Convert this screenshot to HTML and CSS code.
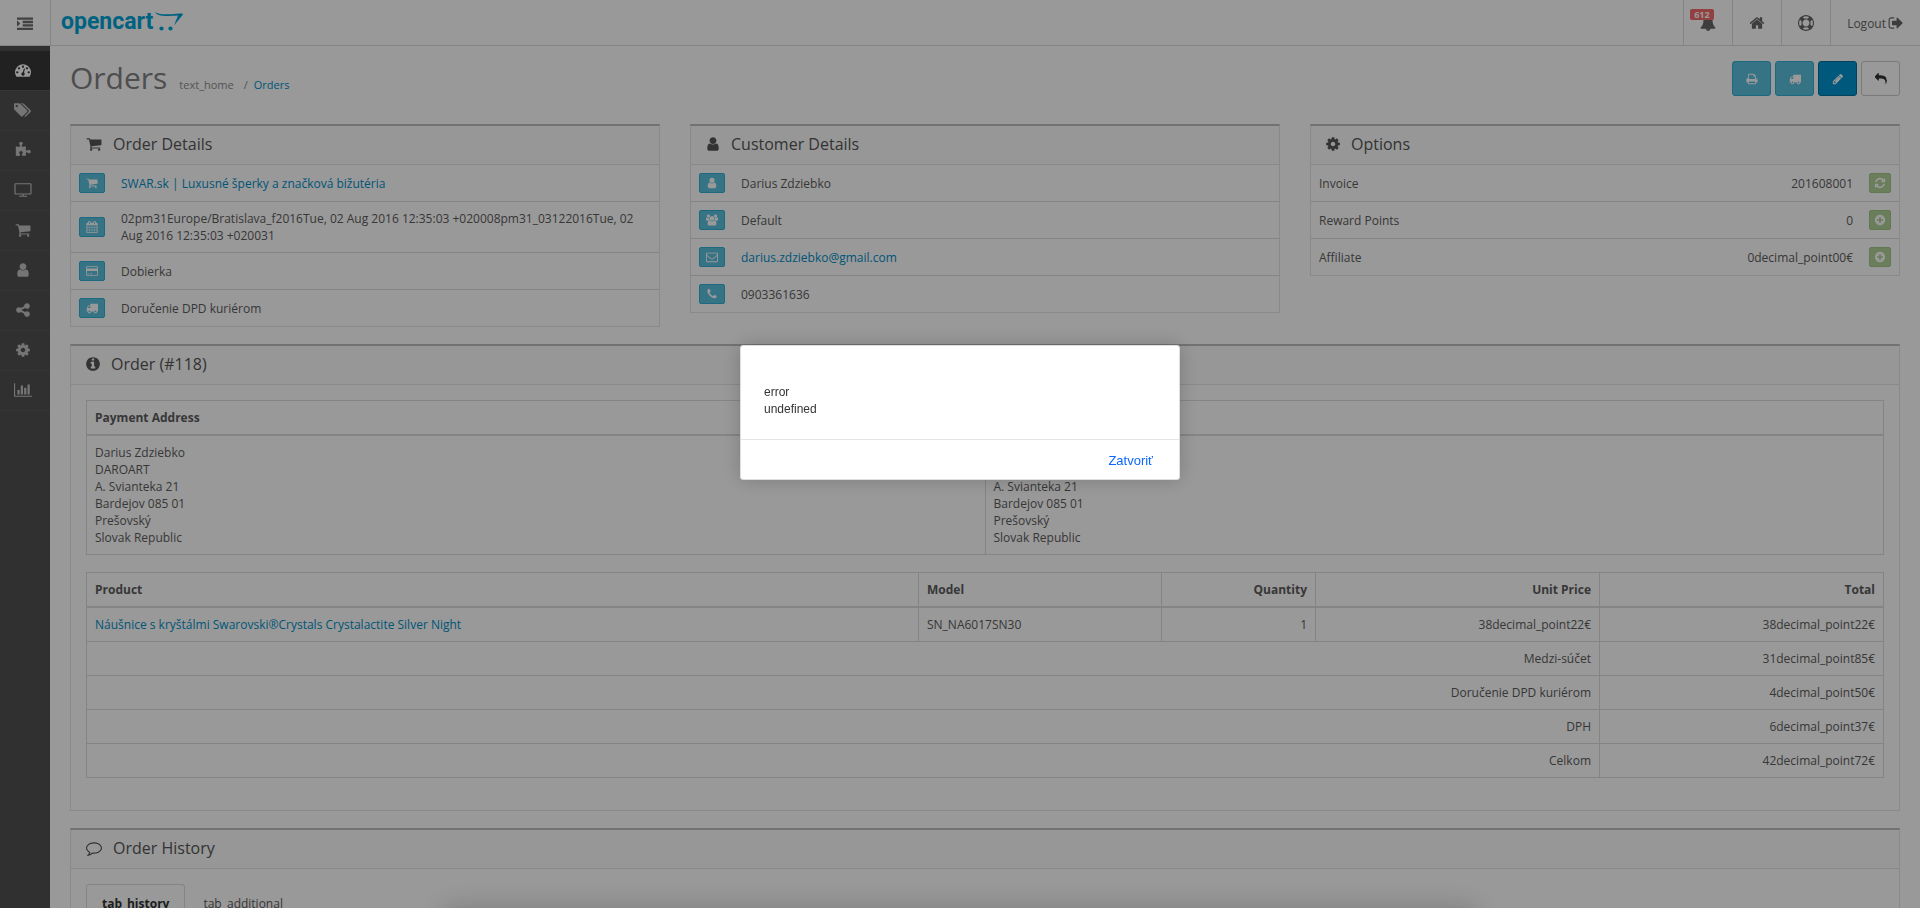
FILE: index.html
```html
<!DOCTYPE html>
<html lang="en">
  <head>
    <meta charset="UTF-8" />
    <meta name="viewport" content="width=device-width, initial-scale=1.0" />
    <title>Orders</title>
    <link rel="stylesheet" href="styles.css" />
  </head>
  <body>
    <!-- Icon sprite -->
    <svg class="sprite" aria-hidden="true">
      <symbol id="cart" viewBox="0 0 1792 1792"><path d="M704 1536q0 52-38 90t-90 38-90-38-38-90 38-90 90-38 90 38 38 90zm896 0q0 52-38 90t-90 38-90-38-38-90 38-90 90-38 90 38 38 90zm128-1088v512q0 24-16.5 42.5t-40.5 21.5l-1044 122q13 60 13 70 0 16-24 64h920q26 0 45 19t19 45-19 45-45 19h-1024q-26 0-45-19t-19-45q0-11 8-31.5t16-36 21.5-40 15.5-29.5l-177-823h-204q-26 0-45-19t-19-45 19-45 45-19h256q16 0 28.5 6.5t19.5 15.5 13 24.5 8 26 5.5 29.5 4.5 26h1201q26 0 45 19t19 45z" /></symbol>
      <symbol id="user" viewBox="0 0 1792 1792"><path d="M1536 1399q0 109-62.5 187t-150.5 78h-854q-88 0-150.5-78t-62.5-187q0-85 8.5-160.5t31.5-152 58.5-131 94-89 134.5-34.5q131 128 313 128t313-128q76 0 134.500 34.500t94 89 58.500 131 31.500 152 8.500 160.500zm-256-887q0 159-112.500 271.500t-271.500 112.500-271.500-112.500-112.500-271.500 112.500-271.500 271.500-112.500 271.500 112.500 112.500 271.500z" /></symbol>
      <symbol id="cog" viewBox="0 0 1792 1792"><path d="M1152 896q0-106-75-181t-181-75-181 75-75 181 75 181 181 75 181-75 75-181zm512-109v222q0 12-8 23t-20 13l-185 28q-19 54-39 91 35 50 107 138 10 12 10 25t-9 23q-27 37-99 108t-94 71q-12 0-26-9l-138-108q-44 23-91 38-16 136-29 186-7 28-36 28h-222q-14 0-24.500-8.500t-11.500-21.500l-28-184q-49-16-90-37l-141 107q-10 9-25 9-14 0-25-11-126-114-165-168-7-10-7-23 0-12 8-23 15-21 51-66.500t54-70.500q-27-50-41-99l-183-27q-13-2-21-12.500t-8-23.500v-222q0-12 8-23t19-13l186-28q14-46 39-92-40-57-107-138-10-12-10-24 0-10 9-23 26-36 98.500-107.500t94.500-71.500q13 0 26 10l138 107q44-23 91-38 16-136 29-186 7-28 36-28h222q14 0 24.500 8.500t11.500 21.500l28 184q49 16 90 37l142-107q9-9 24-9 13 0 25 10 129 119 165 170 7 8 7 22 0 12-8 23-15 21-51 66.500t-54 70.500q26 50 41 98l183 28q13 2 21 12.500t8 23.500z" /></symbol>
      <symbol id="home" viewBox="0 0 1792 1792"><path d="M1472 992v480q0 26-19 45t-45 19h-384v-384h-256v384h-384q-26 0-45-19t-19-45v-480q0-1 .5-3t.5-3l575-474 575 474q1 2 1 6zm223-69l-62 74q-8 9-21 11h-3q-13 0-21-7l-692-577-692 577q-12 8-24 7-13-2-21-11l-62-74q-8-10-7-23.500t11-21.500l719-599q32-26 76-26t76 26l244 204v-195q0-14 9-23t23-9h192q14 0 23 9t9 23v408l219 182q10 8 11 21.500t-7 23.500z" /></symbol>
      <symbol id="truck" viewBox="0 0 1792 1792"><path d="M640 1408q0-52-38-90t-90-38-90 38-38 90 38 90 90 38 90-38 38-90zm-384-512h384v-256h-158q-13 0-22 9l-195 195q-9 9-9 22v30zm1280 512q0-52-38-90t-90-38-90 38-38 90 38 90 90 38 90-38 38-90zm256-1088v1024q0 15-4 26.500t-13.500 18.500-16.500 11.500-23.500 6-22.500 2-25.500 0-22.500-.5q0 106-75 181t-181 75-181-75-75-181h-384q0 106-75 181t-181 75-181-75-75-181h-64q-3 0-22.500.5t-25.500 0-22.500-2-23.500-6-16.500-11.500-13.500-18.500-4-26.500q0-26 19-45t45-19v-320q0-8-.5-35t0-38 2.500-34.500 6.500-37 14-30.500 22.500-30l198-198q19-19 50.500-32t58.500-13h160v-192q0-26 19-45t45-19h1024q26 0 45 19t19 45z" /></symbol>
      <symbol id="pencil" viewBox="0 0 1792 1792"><path d="M491 1536l91-91-235-235-91 91v107h128v128h107zm523-928q0-22-22-22-10 0-17 7l-542 542q-7 7-7 17 0 22 22 22 10 0 17-7l542-542q7-7 7-17zm-54-192l416 416-832 832h-416v-416zm683 96q0 53-37 90l-166 166-416-416 166-165q36-38 90-38 53 0 91 38l235 234q37 39 37 91z" /></symbol>
      <symbol id="reply" viewBox="0 0 1792 1792"><path d="M1792 1120q0 166-127 451-3 7-10.500 24t-13.500 30-13 22q-12 17-28 17-15 0-23.500-10t-8.500-25q0-9 2.500-26.500t2.500-23.500q5-68 5-123 0-112-19.500-200.500t-54-153.500-89-112-117-78-146-49-170.500-25.500-192-7.500h-224v256q0 26-19 45t-45 19-45-19l-512-512q-19-19-19-45t19-45l512-512q19-19 45-19t45 19 19 45v256h224q713 0 875 403 53 134 53 333z" /></symbol>
      <symbol id="print" viewBox="0 0 1792 1792"><path d="M448 1536h896v-256h-896v256zm0-640h896v-384h-160q-40 0-68-28t-28-68v-160h-640v640zm1152 64q0-26-19-45t-45-19-45 19-19 45 19 45 45 19 45-19 19-45zm128 0v416q0 13-9.500 22.500t-22.500 9.500h-224v160q0 40-28 68t-68 28h-960q-40 0-68-28t-28-68v-160h-224q-13 0-22.500-9.500t-9.500-22.500v-416q0-79 56.500-135.500t135.500-56.500h64v-544q0-40 28-68t68-28h672q40 0 88 20t76 48l152 152q28 28 48 76t20 88v256h64q79 0 135.500 56.500t56.500 135.500z" /></symbol>
      <symbol id="plus" viewBox="0 0 1792 1792"><path d="M1344 960v-128q0-26-19-45t-45-19h-256v-256q0-26-19-45t-45-19h-128q-26 0-45 19t-19 45v256h-256q-26 0-45 19t-19 45v128q0 26 19 45t45 19h256v256q0 26 19 45t45 19h128q26 0 45-19t19-45v-256h256q26 0 45-19t19-45zm320-64q0 209-103 385.500t-279.500 279.500-385.500 103-385.500-103-279.500-279.500-103-385.500 103-385.500 279.500-279.500 385.500-103 385.500 103 279.500 279.500 103 385.500z" /></symbol>
      <symbol id="info" viewBox="0 0 1792 1792"><path d="M1152 1376v-160q0-14-9-23t-23-9h-96v-512q0-14-9-23t-23-9h-320q-14 0-23 9t-9 23v160q0 14 9 23t23 9h96v320h-96q-14 0-23 9t-9 23v160q0 14 9 23t23 9h448q14 0 23-9t9-23zm-128-896v-160q0-14-9-23t-23-9h-192q-14 0-23 9t-9 23v160q0 14 9 23t23 9h192q14 0 23-9t9-23zm640 416q0 209-103 385.500t-279.500 279.500-385.500 103-385.500-103-279.500-279.500-103-385.500 103-385.500 279.500-279.500 385.500-103 385.500 103 279.500 279.500 103 385.500z" /></symbol>
      <symbol id="phone" viewBox="0 0 1792 1792"><path d="M1600 1240q0 27-10 70.500t-21 68.500q-21 50-122 106-94 51-186 51-27 0-52.500-3.500t-57.500-12.500-47.500-14.500-55.500-20.500-49-18q-98-35-175-83-128-79-264.500-215.500t-215.500-264.500q-48-77-83-175-3-9-18-49t-20.500-55.500-14.500-47.500-12.500-57.500-3.500-52.500q0-92 51-186 56-101 106-122 25-11 68.500-21t70.500-10q14 0 21 3 18 6 53 76 11 19 30 54t35 63.500 31 53.500q3 4 17.500 25t21.500 35.500 7 28.500q0 20-28.500 50t-62 55-62 53-28.500 46q0 9 5 22.500t8.500 20.500 14 24 11.500 19q76 137 174 235t235 174q2 1 19 11.500t24 14 20.500 8.500 22.500 5q18 0 46-28.500t53-62 55-62 50-28.500q14 0 28.500 7t35.500 21.500 25 17.500q25 15 53.500 31t63.500 35 54 30q70 35 76 53 3 7 3 21z" /></symbol>
      <symbol id="bell" viewBox="0 0 1792 1792"><path d="M912 1696q0-16-16-16-59 0-101.500-42.500t-42.500-101.500q0-16-16-16t-16 16q0 73 51.500 124.500t124.500 51.500q16 0 16-16zm816-288q0 52-38 90t-90 38h-448q0 106-75 181t-181 75-181-75-75-181h-448q-52 0-90-38t-38-90q50-42 91-88t85-119.500 74.500-158.500 50-206 19.500-260q0-152 117-282.500t307-158.500q-8-19-8-39 0-40 28-68t68-28 68 28 28 68q0 20-8 39 190 28 307 158.500t117 282.500q0 139 19.500 260t50 206 74.500 158.500 85 119.500 91 88z" /></symbol>
      <symbol id="tags" viewBox="0 0 1920 1792"><path d="M384 448q0-53-37.500-90.500t-90.500-37.500-90.500 37.500-37.500 90.500 37.500 90.500 90.500 37.500 90.500-37.500 37.500-90.500zm1067 576q0 53-37 90l-491 492q-39 37-91 37-53 0-90-37l-715-716q-38-37-64.500-101t-26.500-117v-416q0-52 38-90t90-38h416q53 0 117 26.500t102 64.500l715 714q37 39 37 91zm384 0q0 53-37 90l-491 492q-39 37-91 37-36 0-59-14t-53-45l470-470q37-37 37-90 0-52-37-91l-715-714q-38-38-102-64.500t-117-26.500h224q53 0 117 26.500t102 64.500l715 714q37 39 37 91z" /></symbol>
      <symbol id="share" viewBox="0 0 1792 1792"><path d="M1344 1024q133 0 226.500 93.500t93.500 226.500-93.500 226.500-226.500 93.500-226.500-93.500-93.500-226.500q0-12 2-34l-360-180q-92 86-218 86-133 0-226.500-93.500t-93.500-226.500 93.500-226.500 226.500-93.500q126 0 218 86l360-180q-2-22-2-34 0-133 93.500-226.500t226.500-93.500 226.500 93.500 93.500 226.500-93.500 226.500-226.500 93.500q-126 0-218-86l-360 180q2 22 2 34t-2 34l360 180q92-86 218-86z" /></symbol>
      <symbol id="chart" viewBox="0 0 2048 1792"><path d="M640 896v512h-256v-512h256zm384-512v1024h-256v-1024h256zm1024 1152v128h-2048v-1536h128v1408h1920zm-640-896v768h-256v-768h256zm384-384v1152h-256v-1152h256z" /></symbol>
      <symbol id="tv" viewBox="0 0 1920 1792"><path d="M1792 1248v-960q0-13-9.500-22.500t-22.500-9.500h-1600q-13 0-22.500 9.500t-9.500 22.500v960q0 13 9.500 22.500t22.500 9.500h1600q13 0 22.500-9.500t9.500-22.500zm128-960v960q0 66-47 113t-113 47h-736v128h352q14 0 23 9t9 23v64q0 14-9 23t-23 9h-832q-14 0-23-9t-9-23v-64q0-14 9-23t23-9h352v-128h-736q-66 0-113-47t-47-113v-960q0-66 47-113t113-47h1600q66 0 113 47t47 113z" /></symbol>
      <symbol id="puzzle" viewBox="0 0 1792 1792"><path d="M1755 1083q0 81-44.500 135t-123.500 54q-41 0-77.500-17.500t-59-38-56.500-38-71-17.500q-110 0-110 124 0 39 16 115t15 115v5q-22 0-33 1-34 3-97.500 11.500t-115.500 13.500-98 5q-61 0-103-26.500t-42-83.500q0-37 17.500-71t38-56.500 38-59 17.500-77.500q0-79-54-123.500t-135-44.500q-84 0-143 45.500t-59 127.500q0 43 15 83t33.500 64.500 33.500 53 15 50.500q0 45-46 89-37 35-117 35-95 0-245-24-9-2-27.500-4t-27.500-4l-13-2q-1 0-3-1-2 0-2-1v-1024q2 1 17.500 3.500t34 5 21.500 3.500q150 24 245 24 80 0 117-35 46-44 46-89 0-22-15-50.500t-33.500-53-33.500-64.500-15-83q0-82 59-127.500t144-45.500q80 0 134 44.500t54 123.500q0 41-17.500 77.500t-38 59-38 56.500-17.500 71q0 57 42 83.500t103 26.500q64 0 180-15t163-17v2q-1 2-3.500 17.500t-5 34-3.500 21.500q-24 150-24 245 0 80 35 117 44 46 89 46 22 0 50.500-15t53-33.500 64.500-33.500 83-15q82 0 127.500 59t45.500 143z" /></symbol>
      <symbol id="gauge" viewBox="0 0 1792 1792"><path d="M384 1152q0-53-37.500-90.500t-90.500-37.500-90.500 37.500-37.500 90.500 37.500 90.500 90.500 37.500 90.500-37.500 37.500-90.500zm192-448q0-53-37.500-90.500t-90.500-37.500-90.500 37.500-37.500 90.500 37.500 90.500 90.500 37.500 90.500-37.500 37.500-90.500zm428 481l101-382q6-26-7.500-48.500t-38.500-29.500-48 6.500-30 39.500l-101 382q-60 5-107 43.500t-63 98.500q-20 77 20 146t117 89 146-20 89-117q16-60-6-117t-72-91zm660-33q0-53-37.500-90.500t-90.500-37.500-90.500 37.500-37.500 90.500 37.500 90.500 90.500 37.500 90.500-37.500 37.500-90.500zm-640-640q0-53-37.500-90.500t-90.500-37.500-90.500 37.500-37.500 90.500 37.500 90.500 90.500 37.500 90.500-37.500 37.500-90.500zm448 192q0-53-37.500-90.500t-90.500-37.500-90.500 37.500-37.500 90.500 37.500 90.500 90.500 37.500 90.500-37.500 37.500-90.500zm320 448q0 261-141 483-19 29-54 29h-1402q-35 0-54-29-141-221-141-483 0-182 71-348t191-286 286-191 348-71 348 71 286 191 191 286 71 348z" /></symbol>
      <symbol id="indent" viewBox="0 0 1792 1792"><path d="M352 832q0 14-9 23l-288 288q-9 9-23 9-13 0-22.500-9.500t-9.500-22.500v-576q0-13 9.500-22.500t22.500-9.500q14 0 23 9l288 288q9 9 9 23zM0 160h1792v256h-1792zM640 544h1152v256h-1152zM640 928h1152v256h-1152zM0 1312h1792v256h-1792z" /></symbol>
      <symbol id="ring" viewBox="0 0 1792 1792"><path d="M896 0q182 0 348 71t286 191 191 286 71 348-71 348-191 286-286 191-348 71-348-71-286-191-191-286-71-348 71-348 191-286 286-191 348-71zm0 128q-190 0-361 90l194 194q82-28 167-28t167 28l194-194q-171-90-361-90zm-678 1129l194-194q-28-82-28-167t28-167l-194-194q-90 171-90 361t90 361zm678 407q190 0 361-90l-194-194q-82 28-167 28t-167-28l-194 194q171 90 361 90zm0-384q159 0 271.500-112.500t112.500-271.500-112.500-271.500-271.500-112.500-271.500 112.500-112.500 271.500 112.500 271.500 271.500 112.500zm484-217l194 194q90-171 90-361t-90-361l-194 194q28 82 28 167t-28 167z" /></symbol>
      <symbol id="signout" viewBox="0 0 1792 1792"><path d="M704 1440q0 4 1 20t.5 26.500-3 23.500-10 19.500-20.500 6.500h-320q-119 0-203.500-84.500t-84.500-203.500v-704q0-119 84.500-203.500t203.500-84.500h320q13 0 22.500 9.500t9.500 22.500q0 4 1 20t.5 26.500-3 23.500-10 19.500-20.500 6.500h-320q-66 0-113 47t-47 113v704q0 66 47 113t113 47h312l11.500 1 11.500 3 8 5.500 7 9 2 13.500zm928-544q0 26-19 45l-544 544q-19 19-45 19t-45-19-19-45v-288h-448q-26 0-45-19t-19-45v-384q0-26 19-45t45-19h448v-288q0-26 19-45t45-19 45 19l544 544q19 19 19 45z" /></symbol>
      <symbol id="comment" viewBox="0 0 1792 1792"><path d="M896 384q-204 0-381.500 69.500t-282 187.500-104.500 255q0 112 71.500 213.500t201.500 175.500l87 50-27 96q-24 91-70 172 152-63 275-171l43-38 57 6q69 8 130 8 204 0 381.500-69.500t282-187.500 104.500-255-104.500-255-282-187.500-381.500-69.500zm896 512q0 174-120 321.500t-326 233-450 85.500q-70 0-145-8-198 175-460 242-49 14-114 22h-5q-15 0-27-10.500t-16-27.500v-1q-3-4-.5-12t2-10 4.500-9.500l6-9 7-8.500 8-9q7-8 31-34.500t34.500-38 31-39.500 32.500-51 27-59 26-76q-157-89-247.500-220t-90.500-281q0-174 120-321.500t326-233 450-85.500 450 85.500 326 233 120 321.500z" /></symbol>
      <symbol id="card" viewBox="0 0 1920 1792"><path d="M1760 128q66 0 113 47t47 113v1216q0 66-47 113t-113 47h-1600q-66 0-113-47t-47-113v-1216q0-66 47-113t113-47h1600zm-1600 128q-13 0-22.500 9.500t-9.500 22.500v224h1664v-224q0-13-9.500-22.500t-22.500-9.500h-1600zm1600 1280q13 0 22.500-9.500t9.500-22.500v-608h-1664v608q0 13 9.500 22.500t22.500 9.500h1600zm-1504-128v-128h256v128h-256zm384 0v-128h384v128h-384z" /></symbol>
      <symbol id="calendar" viewBox="0 0 1792 1792"><path d="M192 1664h288v-288h-288v288zm352 0h320v-288h-320v288zm-352-352h288v-320h-288v320zm352 0h320v-320h-320v320zm-352-384h288v-288h-288v288zm736 736h320v-288h-320v288zm-384-736h320v-288h-320v288zm768 736h288v-288h-288v288zm-384-352h320v-320h-320v320zm-352-864v-288q0-13-9.500-22.500t-22.500-9.500h-64q-13 0-22.500 9.500t-9.500 22.500v288q0 13 9.500 22.500t22.500 9.500h64q13 0 22.500-9.500t9.500-22.500zm736 864h288v-320h-288v320zm-384-384h320v-288h-320v288zm384 0h288v-288h-288v288zm32-480v-288q0-13-9.500-22.500t-22.500-9.500h-64q-13 0-22.500 9.500t-9.500 22.500v288q0 13 9.500 22.500t22.500 9.500h64q13 0 22.500-9.500t9.500-22.500zm384-64v1280q0 52-38 90t-90 38h-1408q-52 0-90-38t-38-90v-1280q0-52 38-90t90-38h128v-96q0-66 47-113t113-47h64q66 0 113 47t47 113v96h384v-96q0-66 47-113t113-47h64q66 0 113 47t47 113v96h128q52 0 90 38t38 90z" /></symbol>
      <symbol id="envelope" viewBox="0 0 1792 1792"><path d="M1664 1504v-768q-32 36-69 66-268 206-426 338-51 43-83 67t-86.500 48.500-102.500 24.500h-2q-48 0-102.500-24.500t-86.500-48.500-83-67q-158-132-426-338-37-30-69-66v768q0 13 9.500 22.500t22.500 9.500h1472q13 0 22.500-9.500t9.500-22.500zm0-1051v-24.500l-.5-13-3-12.500-5.500-9-9-7.500-14-2.500h-1472q-13 0-22.500 9.500t-9.500 22.500q0 168 147 284 193 152 401 317 6 5 35 29.500t46 37.500 44.500 31.500 50.500 27.500 43 9h2q20 0 43-9t50.500-27.500 44.500-31.500 46-37.500 35-29.500q208-165 401-317 54-43 100.500-115.500t46.500-131.500zm128-37v1088q0 66-47 113t-113 47h-1472q-66 0-113-47t-47-113v-1088q0-66 47-113t113-47h1472q66 0 113 47t47 113z" /></symbol>
      <symbol id="group" viewBox="0 0 1920 1792"><path d="M593 896q-162 5-265 128h-134q-82 0-138-40.500t-56-118.500q0-353 124-353 6 0 43.500 21t97.500 42.500 119 21.500q67 0 133-23-5 37-5 66 0 159 93 293zm1071 637q0 120-73 189.500t-194 69.500h-874q-121 0-194-69.500t-73-189.500q0-53 3.500-103.500t14-109 26.500-108.500 43-97.500 62-81 85.500-53.500 111.500-20q10 0 43 21.500t73 48 107 48 135 21.500 135-21.500 107-48 73-48 43-21.500q61 0 111.500 20t85.500 53.500 62 81 43 97.500 26.500 108.500 14 109 3.500 103.500zm-1024-1277q0 106-75 181t-181 75-181-75-75-181 75-181 181-75 181 75 75 181zm704 384q0 159-112.500 271.500t-271.500 112.500-271.500-112.500-112.500-271.500 112.500-271.500 271.500-112.500 271.500 112.500 112.500 271.500zm576 225q0 78-56 118.500t-138 40.500h-134q-103-123-265-128 93-134 93-293 0-29-5-66 66 23 133 23 59 0 119-21.500t97.500-42.500 43.500-21q124 0 124 353zm-128-609q0 106-75 181t-181 75-181-75-75-181 75-181 181-75 181 75 75 181z" /></symbol>
      <symbol id="refresh" viewBox="0 0 1792 1792"><path d="M1639 1056q0 5-1 7-64 268-268 434.500t-478 166.500q-146 0-282.500-55t-243.500-157l-129 129q-19 19-45 19t-45-19-19-45v-448q0-26 19-45t45-19h448q26 0 45 19t19 45-19 45l-137 137q71 66 161 102t187 36q134 0 250-65t186-179q11-17 53-117 8-23 30-23h192q13 0 22.500 9.500t9.500 22.500zm25-800v448q0 26-19 45t-45 19h-448q-26 0-45-19t-19-45 19-45l138-138q-148-137-349-137-134 0-250 65t-186 179q-11 17-53 117-8 23-30 23h-199q-13 0-22.500-9.500t-9.500-22.500v-7q65-268 270-434.500t480-166.500q146 0 284 55.500t245 156.500l130-129q19-19 45-19t45 19 19 45z" /></symbol>
    </svg>

    <header class="header">
      <button type="button" class="menu-toggle" aria-label="Toggle menu">
        <svg class="icon icon-lg"><use href="#indent" /></svg>
      </button>
      <a href="#" class="brand">
        <span class="brand-name">opencart</span>
        <svg class="brand-cart" viewBox="0 0 28 20">
          <path d="M0 0C2 4 8 4.500 23 3.500L19 13.500 28 2.500C28 1 26 1.500 22 1.700 12 2.500 4 3 0 0Z" />
          <circle cx="6.500" cy="16.500" r="2.100" />
          <circle cx="15.500" cy="16.500" r="2.100" />
        </svg>
      </a>
      <nav class="top-nav">
        <a href="#" class="alerts" aria-label="Notifications">
          <svg class="icon icon-lg"><use href="#bell" /></svg>
          <span class="badge">612</span>
        </a>
        <a href="#" aria-label="Home"><svg class="icon icon-lg"><use href="#home" /></svg></a>
        <a href="#" aria-label="Help"><svg class="icon icon-lg"><use href="#ring" /></svg></a>
        <a href="#" class="logout">Logout <svg class="icon icon-lg"><use href="#signout" /></svg></a>
      </nav>
    </header>

    <div class="wrapper">
      <nav class="sidebar">
        <a href="#" class="active" aria-label="Dashboard"><svg class="icon icon-lg"><use href="#gauge" /></svg></a>
        <a href="#" aria-label="Catalog"><svg class="icon icon-wide"><use href="#tags" /></svg></a>
        <a href="#" aria-label="Extensions"><svg class="icon icon-lg"><use href="#puzzle" /></svg></a>
        <a href="#" aria-label="Design"><svg class="icon icon-wide"><use href="#tv" /></svg></a>
        <a href="#" aria-label="Sales"><svg class="icon icon-lg"><use href="#cart" /></svg></a>
        <a href="#" aria-label="Customers"><svg class="icon icon-lg"><use href="#user" /></svg></a>
        <a href="#" aria-label="Marketing"><svg class="icon icon-lg"><use href="#share" /></svg></a>
        <a href="#" aria-label="System"><svg class="icon icon-lg"><use href="#cog" /></svg></a>
        <a href="#" aria-label="Reports"><svg class="icon icon-wide"><use href="#chart" /></svg></a>
      </nav>

      <main class="content">
        <div class="page-header">
          <h1>Orders</h1>
          <ul class="breadcrumb">
            <li><a href="#">text_home</a></li>
            <li><a href="#" class="current">Orders</a></li>
          </ul>
          <div class="actions">
            <button type="button" class="btn btn-info" aria-label="Print invoice"><svg class="icon"><use href="#print" /></svg></button>
            <button type="button" class="btn btn-info" aria-label="Print shipping list"><svg class="icon"><use href="#truck" /></svg></button>
            <button type="button" class="btn btn-primary" aria-label="Edit"><svg class="icon"><use href="#pencil" /></svg></button>
            <button type="button" class="btn btn-default" aria-label="Back"><svg class="icon"><use href="#reply" /></svg></button>
          </div>
        </div>

        <div class="row">
          <section class="panel">
            <h2><svg class="icon"><use href="#cart" /></svg> Order Details</h2>
            <table class="details">
              <tr>
                <td><button type="button" class="btn-xs" aria-label="Store"><svg class="icon"><use href="#cart" /></svg></button></td>
                <td><a href="#">SWAR.sk | Luxusné šperky a značková bižutéria</a></td>
              </tr>
              <tr>
                <td><button type="button" class="btn-xs" aria-label="Date added"><svg class="icon"><use href="#calendar" /></svg></button></td>
                <td>02pm31Europe/Bratislava_f2016Tue, 02 Aug 2016 12:35:03 +020008pm31_03122016Tue, 02 Aug 2016 12:35:03 +020031</td>
              </tr>
              <tr>
                <td><button type="button" class="btn-xs" aria-label="Payment method"><svg class="icon"><use href="#card" /></svg></button></td>
                <td>Dobierka</td>
              </tr>
              <tr>
                <td><button type="button" class="btn-xs" aria-label="Shipping method"><svg class="icon"><use href="#truck" /></svg></button></td>
                <td>Doručenie DPD kuriérom</td>
              </tr>
            </table>
          </section>

          <section class="panel">
            <h2><svg class="icon icon-narrow"><use href="#user" /></svg> Customer Details</h2>
            <table class="details">
              <tr>
                <td><button type="button" class="btn-xs" aria-label="Customer"><svg class="icon"><use href="#user" /></svg></button></td>
                <td>Darius Zdziebko</td>
              </tr>
              <tr>
                <td><button type="button" class="btn-xs" aria-label="Customer group"><svg class="icon"><use href="#group" /></svg></button></td>
                <td>Default</td>
              </tr>
              <tr>
                <td><button type="button" class="btn-xs" aria-label="E-mail"><svg class="icon"><use href="#envelope" /></svg></button></td>
                <td><a href="#">darius.zdziebko@gmail.com</a></td>
              </tr>
              <tr>
                <td><button type="button" class="btn-xs" aria-label="Telephone"><svg class="icon"><use href="#phone" /></svg></button></td>
                <td>0903361636</td>
              </tr>
            </table>
          </section>

          <section class="panel">
            <h2><svg class="icon icon-narrow"><use href="#cog" /></svg> Options</h2>
            <table class="options">
              <tr>
                <td>Invoice</td>
                <td class="text-right">201608001</td>
                <td><button type="button" class="btn-xs btn-success" aria-label="Refresh"><svg class="icon"><use href="#refresh" /></svg></button></td>
              </tr>
              <tr>
                <td>Reward Points</td>
                <td class="text-right">0</td>
                <td><button type="button" class="btn-xs btn-success" aria-label="Add reward points"><svg class="icon"><use href="#plus" /></svg></button></td>
              </tr>
              <tr>
                <td>Affiliate</td>
                <td class="text-right">0decimal_point00€</td>
                <td><button type="button" class="btn-xs btn-success" aria-label="Add commission"><svg class="icon"><use href="#plus" /></svg></button></td>
              </tr>
            </table>
          </section>
        </div>

        <section class="panel">
          <h2><svg class="icon icon-narrow"><use href="#info" /></svg> Order (#118)</h2>
          <div class="panel-body">
            <table class="bordered">
              <thead>
                <tr>
                  <th class="half">Payment Address</th>
                  <th class="half">Shipping Address</th>
                </tr>
              </thead>
              <tbody>
                <tr>
                  <td>Darius Zdziebko<br />DAROART<br />A. Svianteka 21<br />Bardejov 085 01<br />Prešovský<br />Slovak Republic</td>
                  <td>Darius Zdziebko<br />DAROART<br />A. Svianteka 21<br />Bardejov 085 01<br />Prešovský<br />Slovak Republic</td>
                </tr>
              </tbody>
            </table>

            <table class="bordered">
              <thead>
                <tr>
                  <th>Product</th>
                  <th class="col-model">Model</th>
                  <th class="col-quantity text-right">Quantity</th>
                  <th class="col-price text-right">Unit Price</th>
                  <th class="col-price text-right">Total</th>
                </tr>
              </thead>
              <tbody>
                <tr>
                  <td><a href="#">Náušnice s kryštálmi Swarovski®Crystals Crystalactite Silver Night</a></td>
                  <td>SN_NA6017SN30</td>
                  <td class="text-right">1</td>
                  <td class="text-right">38decimal_point22€</td>
                  <td class="text-right">38decimal_point22€</td>
                </tr>
                <tr>
                  <td class="text-right" colspan="4">Medzi-súčet</td>
                  <td class="text-right">31decimal_point85€</td>
                </tr>
                <tr>
                  <td class="text-right" colspan="4">Doručenie DPD kuriérom</td>
                  <td class="text-right">4decimal_point50€</td>
                </tr>
                <tr>
                  <td class="text-right" colspan="4">DPH</td>
                  <td class="text-right">6decimal_point37€</td>
                </tr>
                <tr>
                  <td class="text-right" colspan="4">Celkom</td>
                  <td class="text-right">42decimal_point72€</td>
                </tr>
              </tbody>
            </table>
          </div>
        </section>

        <section class="panel">
          <h2><svg class="icon"><use href="#comment" /></svg> Order History</h2>
          <div class="panel-body">
            <div class="tabs">
              <a href="#" class="tab active">tab_history</a>
              <a href="#" class="tab">tab_additional</a>
            </div>
          </div>
        </section>
      </main>
    </div>

    <!-- Alert dialog -->
    <div class="overlay">
      <div class="dialog" role="alertdialog" aria-label="error">
        <p>error<br />undefined</p>
        <div class="dialog-footer">
          <button type="button">Zatvoriť</button>
        </div>
      </div>
      <div class="bottom-shadow"></div>
    </div>
  </body>
</html>
```
FILE: styles.css
```css
* {
  box-sizing: border-box;
}

html,
body {
  height: 100%;
  overflow: hidden;
}

body {
  margin: 0;
  display: flex;
  flex-direction: column;
  font-family: "Open Sans", sans-serif;
  font-size: 12px;
  line-height: 17px;
  color: #5c5c5c;
  background-color: #fff;
}

a {
  color: #008fc7;
  text-decoration: none;
}

button {
  font: inherit;
  cursor: pointer;
}

.sprite {
  display: none;
}

.icon {
  width: 12px;
  height: 12px;
  fill: currentColor;
  flex: none;
}

.icon-lg {
  width: 16px;
  height: 16px;
}

.icon-wide {
  width: 18px;
  height: 16px;
}

/* Header */
.header {
  display: flex;
  flex: none;
  height: 46px;
  border-bottom: 1px solid #ddd;
}

.menu-toggle {
  display: flex;
  align-items: center;
  justify-content: center;
  width: 51px;
  padding: 2px 0 0;
  border: none;
  border-right: 1px solid #ddd;
  background: none;
  color: #6d6d6d;
}

.brand {
  display: flex;
  align-items: flex-start;
  gap: 2px;
  padding: 10px;
  color: #00a4d8;
}

.brand-name {
  font-family: Roboto, sans-serif;
  font-size: 23px;
  line-height: 24px;
  font-weight: 700;
}

.brand-cart {
  width: 28px;
  height: 20px;
  margin-top: 2px;
  fill: currentColor;
}

.top-nav {
  display: flex;
  margin-left: auto;
}

.top-nav a {
  display: flex;
  align-items: center;
  gap: 2px;
  padding: 1px 16px 0;
  border-left: 1px solid #ddd;
  color: #666;
}

.alerts {
  position: relative;
}

.badge {
  position: absolute;
  top: 9px;
  left: 6px;
  padding: 0 4px;
  border-radius: 2px;
  background-color: #f56b6b;
  color: #fff;
  font-size: 9px;
  line-height: 11px;
  font-weight: 700;
}

/* Sidebar */
.wrapper {
  display: flex;
  flex: 1;
  min-height: 0;
}

.sidebar {
  flex: none;
  width: 50px;
  padding-top: 5px;
  background-color: #515151;
}

.sidebar a {
  display: flex;
  align-items: center;
  justify-content: center;
  height: 40px;
  padding: 0 4px 1px 0;
  border-bottom: 1px solid #5a5a5a;
  color: #c4c4c4;
}

.sidebar a.active {
  background-color: #373737;
  color: #fff;
}

/* Page */
.content {
  flex: 1;
  min-width: 0;
  padding: 15px 20px 0;
}

.page-header {
  display: flex;
  align-items: flex-start;
  margin-bottom: 28px;
}

h1 {
  margin: 0;
  font-size: 30px;
  line-height: 33px;
  font-weight: 400;
  color: #828282;
}

.breadcrumb {
  display: flex;
  margin: 0;
  padding: 15px 12px 0;
  list-style: none;
  font-size: 11px;
}

.breadcrumb a {
  color: #8c8c8c;
}

.breadcrumb a.current {
  color: #008fc7;
}

.breadcrumb li + li::before {
  content: "/";
  padding: 0 6px 0 10px;
  color: #8c8c8c;
}

.actions {
  display: flex;
  gap: 4px;
  margin-left: auto;
}

.btn {
  display: flex;
  align-items: center;
  justify-content: center;
  width: 39px;
  height: 35px;
  padding: 0;
  border: 1px solid;
  border-radius: 3px;
}

.btn-info {
  background-color: #5bc0de;
  border-color: #31b0d5;
  color: #fff;
}

.btn-primary {
  background-color: #0095cf;
  border-color: #00719e;
  color: #fff;
}

.btn-default {
  background-color: #fff;
  border-color: #ccc;
  color: #333;
}

.row {
  display: grid;
  grid-template-columns: repeat(3, 1fr);
  align-items: start;
  gap: 30px;
}

.panel {
  margin-bottom: 17px;
  border: 1px solid #e4e4e4;
  border-top: 2px solid #bfbfbf;
}

.panel h2 {
  display: flex;
  align-items: center;
  gap: 11px;
  height: 39px;
  margin: 0;
  padding: 0 15px 2px;
  border-bottom: 1px solid #e4e4e4;
  background-color: #fcfcfc;
  font-size: 16px;
  font-weight: 400;
  color: #555;
}

.panel h2 .icon {
  width: 16px;
  height: 16px;
}

.panel h2 .icon-narrow {
  margin: 0 -1px;
}

.panel-body {
  padding: 15px;
}

table {
  width: 100%;
  border-collapse: collapse;
}

td,
th {
  padding: 8px;
  text-align: left;
}

.text-right {
  text-align: right;
}

.details tr + tr,
.options tr + tr {
  border-top: 1px solid #ddd;
}

.details td:first-child,
.options td:last-child {
  width: 1%;
}

.btn-xs {
  display: flex;
  align-items: center;
  justify-content: center;
  width: 26px;
  height: 20px;
  padding: 0;
  border: 1px solid #31b0d5;
  border-radius: 2px;
  background-color: #5bc0de;
  color: #fff;
}

.btn-success {
  width: 22px;
  border-color: #a4ca86;
  background-color: #b1d298;
}

.bordered {
  margin-bottom: 17px;
}

.bordered td,
.bordered th {
  border: 1px solid #ddd;
}

.bordered td {
  vertical-align: top;
}

.bordered th {
  border-bottom-width: 2px;
}

.half {
  width: 50%;
}

.col-model {
  width: 243px;
}

.col-quantity {
  width: 154px;
}

.col-price {
  width: 284px;
}

.tabs {
  display: flex;
  gap: 2px;
  border-bottom: 1px solid #ddd;
}

.tab {
  padding: 10px 15px;
  border: 1px solid transparent;
  border-bottom: none;
  border-radius: 3px 3px 0 0;
  color: #5c5c5c;
}

.tab.active {
  border-color: #ddd;
  color: #333;
  font-weight: 700;
}

/* Dialog */
.overlay {
  position: fixed;
  inset: 0;
  display: flex;
  justify-content: center;
  align-items: flex-start;
  padding-top: 345px;
  overflow: hidden;
  background-color: rgba(0, 0, 0, 0.4);
}

.dialog {
  width: 440px;
  border: 1px solid #ddd;
  border-radius: 3px;
  background-color: #fff;
  box-shadow: 0 0 20px rgba(0, 0, 0, 0.2);
  font-family: "Liberation Sans", Arial, sans-serif;
  color: #333;
}

.dialog p {
  margin: 0;
  padding: 38px 23px 21px;
}

.dialog-footer {
  display: flex;
  justify-content: flex-end;
  padding: 12px 26px 10px;
  border-top: 1px solid #e4e4e4;
}

.dialog-footer button {
  padding: 0;
  border: none;
  background: none;
  color: #0a66ff;
  font-size: 13px;
}

.bottom-shadow {
  position: absolute;
  top: 100%;
  left: 23%;
  right: 23%;
  height: 40px;
  box-shadow: 0 0 30px rgba(0, 0, 0, 0.2);
}
```
